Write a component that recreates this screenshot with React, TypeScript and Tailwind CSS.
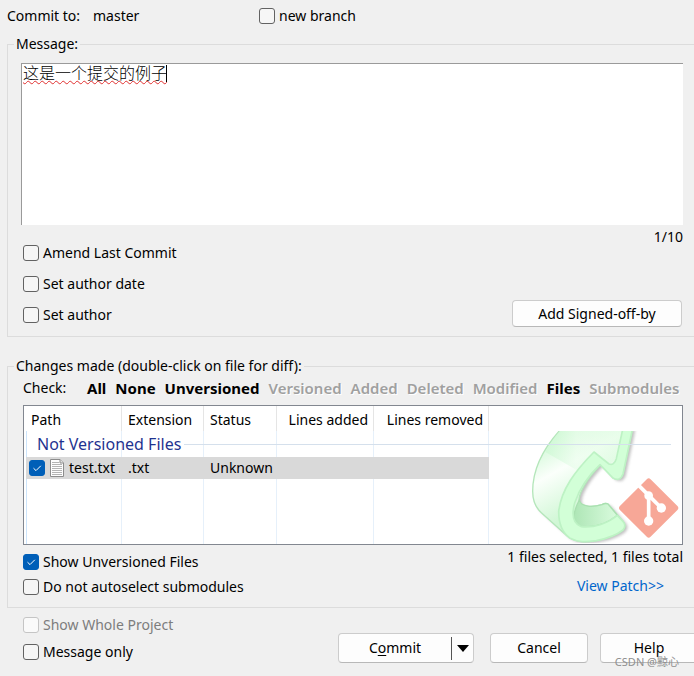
import React, { useState } from "react";

type CheckProps = {
  label?: string;
  name?: string;
  defaultChecked?: boolean;
  disabled?: boolean;
};

function Check({ label, name, defaultChecked = false, disabled = false }: CheckProps) {
  return (
    <label className={`flex items-center gap-1 leading-5 ${disabled ? "text-[#7d7d7d]" : "text-black"}`}>
      <span className="relative block size-4">
        <input
          type="checkbox"
          aria-label={name}
          defaultChecked={defaultChecked}
          disabled={disabled}
          className="peer block size-4 appearance-none rounded-[3px] border border-[#626262] bg-[#f6f6f6] checked:border-[#005fb8] checked:bg-[#005fb8] disabled:border-[#c5c5c5] disabled:bg-[#fafafa]"
        />
        <svg
          viewBox="0 0 16 16"
          fill="none"
          stroke="white"
          className="pointer-events-none absolute inset-0 hidden size-4 peer-checked:block"
        >
          <path d="M4.5 8.2 L7 10.6 L11.8 5.8" />
        </svg>
      </span>
      {label}
    </label>
  );
}

function FileIcon() {
  return (
    <svg viewBox="0 0 14 18" className="h-[18px] w-[14px] shrink-0" fill="none">
      <path d="M0.5 0.5 H10 L13.5 4 V17.5 H0.5 Z" fill="#fdfdfd" stroke="#8c8c8c" />
      <path d="M10 0.5 V4 H13.5" fill="#e4e4e4" stroke="#8c8c8c" />
      <path d="M2 3.5 H9 M2 5.5 H12 M2 7.5 H12 M2 9.5 H12 M2 11.5 H12 M2 13.5 H12 M2 15.5 H12" stroke="#b4b4b4" />
    </svg>
  );
}

const outline =
  "M102 0 C50 55 14 115 14 190 C14 222 24 240 40 254 L115 322 C140 345 175 342 205 338 C245 330 270 318 285 306 Q296 292 285 280 L240 228 Q232 224 222 230 C195 238 165 238 154 222 C148 200 178 150 218 110 L255 150 Q276 162 285 138 L314 0 Z";

function GitLogo() {
  return (
    <svg viewBox="6 9 450 336" className="absolute right-[2px] bottom-px h-[112px] w-[150px]">
      <defs>
        <linearGradient id="body" x1="0.1" y1="0.1" x2="0.5" y2="0.9">
          <stop offset="0" stopColor="#cdf8d3" />
          <stop offset="0.35" stopColor="#fbfffb" />
          <stop offset="0.8" stopColor="#d0f7d5" />
        </linearGradient>
        <linearGradient id="head" x1="0" y1="0" x2="1" y2="0">
          <stop offset="0" stopColor="#c9f8d0" />
          <stop offset="0.4" stopColor="#e9fdeb" />
          <stop offset="1" stopColor="#dcfcdf" />
        </linearGradient>
        <linearGradient id="inner" x1="0" y1="0" x2="1" y2="0">
          <stop offset="0" stopColor="#aee6b6" />
          <stop offset="1" stopColor="#d9fbdd" />
        </linearGradient>
        <filter id="soft" x="-20%" y="-20%" width="140%" height="140%">
          <feGaussianBlur stdDeviation="5" />
        </filter>
      </defs>
      <path d={outline} fill="#8c8c8c" opacity="0.55" filter="url(#soft)" transform="translate(8 5)" />
      <path d={outline} fill="url(#body)" stroke="#b4e6ba" strokeWidth="4" />
      <path d="M102 0 C82 24 66 46 52 72 L150 128 L198 72 L243 108 L262 95 L285 0 Z" fill="url(#head)" opacity="0.6" />
      <path
        d="M154 216 C158 238 195 238 222 230 Q232 224 240 228 L268 262 C240 285 200 300 160 296 C128 285 136 250 154 216 Z"
        fill="url(#inner)"
        stroke="#a9e0b0"
        strokeWidth="4"
      />
      <path
        d="M198 72 C140 130 100 185 92 250 C92 285 100 312 125 330 C150 344 175 342 205 338 C245 330 270 318 285 306 Q296 292 285 280 L268 262 C240 285 200 300 160 296 C130 285 132 255 140 225 C155 180 182 142 216 110 L255 150 Q276 162 285 138 L314 0 L285 0 L265 92 Q258 114 243 108 Z"
        fill="#d2ffd7"
        stroke="#bdf2c4"
        strokeWidth="5"
        strokeLinejoin="round"
      />
      <rect x="297" y="175" width="130" height="130" rx="8" fill="#f7a797" transform="rotate(45 362 240)" />
      <g stroke="white" strokeWidth="11" fill="none">
        <path d="M332 172 L362 202 L400 240" />
        <path d="M362 202 V279" />
      </g>
      <g fill="white">
        <circle cx="362" cy="203" r="13" />
        <circle cx="400" cy="240" r="14" />
        <circle cx="362" cy="279" r="14" />
      </g>
    </svg>
  );
}

const filters = [
  { label: "All", enabled: true },
  { label: "None", enabled: true },
  { label: "Unversioned", enabled: true },
  { label: "Versioned", enabled: false },
  { label: "Added", enabled: false },
  { label: "Deleted", enabled: false },
  { label: "Modified", enabled: false },
  { label: "Files", enabled: true },
  { label: "Submodules", enabled: false },
];

const button = "rounded-[4px] border border-[#cccccc] border-b-[#b8b8b8] bg-[#fdfdfd] text-center";

export default function App() {
  const [message, setMessage] = useState("这是一个提交的例子");

  return (
    <div className="min-h-screen overflow-hidden bg-[#f0f0f0] pt-1.5 pl-[7px] font-['Noto_Sans','Noto_Sans_CJK_SC',sans-serif] text-[14px] leading-5 text-black">
      <div className="flex h-7">
        <span className="w-[86px]">Commit to:</span>
        <span className="w-[166px]">master</span>
        <div>
          <Check label="new branch" />
        </div>
      </div>

      <fieldset className="border border-r-0 border-[#dcdcdc] pr-[11px] pl-[13px]">
        <legend className="-ml-[7px] px-0.5">Message:</legend>
        <div className="relative mt-[9px]">
          <textarea
            aria-label="Message"
            spellCheck={false}
            value={message}
            onChange={(e) => setMessage(e.target.value)}
            className="block h-[162px] w-full resize-none border-t border-l border-[#9a9a9a] bg-white px-px text-[16px] leading-[18px] font-light underline decoration-[#e03030] decoration-wavy decoration-1 underline-offset-1 outline-none"
          />
          <span className="absolute top-0.5 left-[145px] h-[17px] w-px bg-black" />
        </div>
        <div className="flex justify-between pb-2.5 pl-0.5">
          <div className="flex flex-col gap-[11px] pt-[18px] pb-px">
            <Check label="Amend Last Commit" />
            <Check label="Set author date" />
            <Check label="Set author" />
          </div>
          <div className="-mb-px flex flex-col items-end justify-between pt-0.5">
            <span>1/10</span>
            <button type="button" className={`${button} mr-px h-[27px] w-[170px]`}>
              Add Signed-off-by
            </button>
          </div>
        </div>
      </fieldset>

      <fieldset className="mt-[19px] border border-r-0 border-[#dcdcdc] pr-[11px] pb-2.5 pl-[15px]">
        <legend className="-ml-[9px] px-0.5">Changes made (double-click on file for diff):</legend>
        <div className="flex pt-0.5">
          <span className="w-16 shrink-0">Check:</span>
          <div className="flex gap-[9px] text-[15px]">
            {filters.map((f) => (
              <button
                key={f.label}
                type="button"
                disabled={!f.enabled}
                className="font-bold disabled:font-semibold disabled:text-[#a0a0a0] disabled:[text-shadow:1px_1px_0_white]"
              >
                {f.label}
              </button>
            ))}
          </div>
        </div>

        <div className="relative mt-[7px] h-[140px] overflow-hidden border border-[#828790] bg-white">
          <GitLogo />
          <div className="absolute top-[25px] bottom-0 left-[2px] flex">
            <span className="w-px bg-[#cce4fb]" />
            <span className="w-[95px] border-r border-[#e6f0fa]" />
            <span className="w-[82px] border-r border-[#e6f0fa]" />
            <span className="w-[73px] border-r border-[#e6f0fa]" />
            <span className="w-[97px] border-r border-[#e6f0fa]" />
            <span className="w-[115px] border-r border-[#e6f0fa]" />
          </div>
          <table className="relative ml-[2px] w-[calc(100%-2px)] table-fixed border-separate border-spacing-0 text-left whitespace-nowrap">
            <colgroup>
              <col className="w-24" />
              <col className="w-[82px]" />
              <col className="w-[73px]" />
              <col className="w-[97px]" />
              <col className="w-[115px]" />
              <col />
            </colgroup>
            <thead>
              <tr className="h-[25px] [&>th]:border-r [&>th]:border-[#e5e5e5] [&>th]:p-0 [&>th]:pt-0.5 [&>th]:font-normal">
                <th>
                  <span className="pl-[5px]">Path</span>
                </th>
                <th>
                  <span className="pl-1.5">Extension</span>
                </th>
                <th>
                  <span className="pl-1.5">Status</span>
                </th>
                <th className="text-right">
                  <span className="pr-[5px]">Lines added</span>
                </th>
                <th className="text-right">
                  <span className="pr-[5px]">Lines removed</span>
                </th>
                <td />
              </tr>
            </thead>
            <tbody>
              <tr className="h-[26px]">
                <th colSpan={6} className="p-0 font-normal">
                  <div className="flex items-center gap-[3px] pr-[11px] pl-[11px] text-[16px] text-[#1f3390]">
                    Not Versioned Files
                    <span className="h-px flex-1 bg-[#d5e0ec]" />
                  </div>
                </th>
              </tr>
              <tr className="h-[22px] *:p-0">
                <td className="bg-[#d9d9d9]">
                  <div className="flex items-center gap-[5px] pl-[3px]">
                    <Check name="test.txt" defaultChecked />
                    <FileIcon />
                    <span>test.txt</span>
                  </div>
                </td>
                <td className="bg-[#d9d9d9]">
                  <span className="pl-1.5">.txt</span>
                </td>
                <td className="bg-[#d9d9d9]">
                  <span className="pl-1.5">Unknown</span>
                </td>
                <td className="bg-[#d9d9d9]" />
                <td className="bg-[#d9d9d9]" />
                <td />
              </tr>
            </tbody>
          </table>
        </div>

        <div className="flex justify-between pt-[7px]">
          <div className="flex flex-col gap-[5px]">
            <Check label="Show Unversioned Files" defaultChecked />
            <Check label="Do not autoselect submodules" />
          </div>
          <div className="-mt-[5px] flex flex-col items-end gap-[9px]">
            <span>1 files selected, 1 files total</span>
            <a href="#patch" className="mr-[19px] text-[#0066cc]">
              View Patch&gt;&gt;
            </a>
          </div>
        </div>
      </fieldset>

      <div className="flex items-start justify-between pt-[7px] pb-3 pl-4">
        <div className="flex flex-col gap-[7px]">
          <Check label="Show Whole Project" disabled />
          <Check label="Message only" />
        </div>
        <div className="relative -mr-1 mt-[18px] flex h-[30px]">
          <div className={`${button} mr-4 flex w-[136px] items-center`}>
            <button type="button" className="flex-1">
              C<span className="underline underline-offset-2">o</span>mmit
            </button>
            <button
              type="button"
              aria-label="More commit actions"
              className="flex h-[23px] w-[22px] items-center justify-center border-l border-[#555555]"
            >
              <svg viewBox="0 0 12 7" className="h-[7px] w-3">
                <path d="M0 0 H12 L6 7 Z" fill="black" />
              </svg>
            </button>
          </div>
          <button type="button" className={`${button} mr-3 w-[98px]`}>
            Cancel
          </button>
          <button type="button" className={`${button} w-[98px]`}>
            Help
          </button>
          <span className="absolute right-[19px] -bottom-[7px] text-[11px] leading-4 whitespace-nowrap text-[#8f8f8f]">
            CSDN @黥心
          </span>
        </div>
      </div>
    </div>
  );
}
